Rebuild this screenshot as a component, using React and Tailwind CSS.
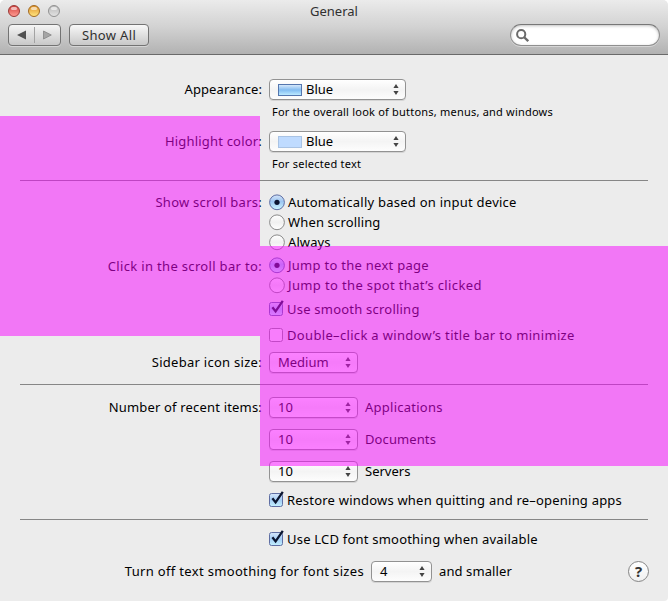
import React from "react";

function Row({ className = "", labelClass = "", label = "", children }) {
  return (
    <div className={`flex items-center gap-[7px] ${className}`}>
      <div className={`w-[262px] shrink-0 text-right whitespace-nowrap ${labelClass}`}>{label}</div>
      {children}
    </div>
  );
}

function Popup({ className = "", swatch, children }) {
  return (
    <div
      className={`flex h-[21px] shrink-0 items-center rounded-[4px] border border-[#929292] bg-linear-to-b from-white via-[#f4f4f4] to-[#fdfdfd] pr-[6px] pl-2 shadow-[0_1px_0_rgba(0,0,0,0.1)] ${className}`}
    >
      {swatch}
      <span className="grow pb-[2px] whitespace-nowrap">{children}</span>
      <svg width="6" height="11" viewBox="0 0 6 11" fill="#444">
        <path d="M3 0 5.6 4H.4ZM3 11 .4 7h5.2Z" />
      </svg>
    </div>
  );
}

function Radio({ on }) {
  return (
    <svg className="shrink-0" width="16" height="17" viewBox="0 0 16 17">
      <defs>
        <linearGradient id="radioOn" x1="0" y1="0" x2="0" y2="1">
          <stop offset="0" stopColor="#d5e4f8" />
          <stop offset=".45" stopColor="#9cc6f2" />
          <stop offset="1" stopColor="#ccf6ff" />
        </linearGradient>
        <linearGradient id="radioOff" x1="0" y1="0" x2="0" y2="1">
          <stop offset="0" stopColor="#fff" />
          <stop offset=".5" stopColor="#f0f0f0" />
          <stop offset="1" stopColor="#fff" />
        </linearGradient>
      </defs>
      <circle cx="8" cy="8.3" r="7.4" fill={on ? "url(#radioOn)" : "url(#radioOff)"} stroke={on ? "#5f6ea3" : "#8a8a8a"} />
      {on && <circle cx="8" cy="8.3" r="2.6" fill="#0b1530" />}
    </svg>
  );
}

function Check({ on }) {
  return (
    <svg className="shrink-0 overflow-visible" width="14" height="15" viewBox="0 0 14 15">
      <defs>
        <linearGradient id="checkOn" x1="0" y1="0" x2="0" y2="1">
          <stop offset="0" stopColor="#d6e6fa" />
          <stop offset=".5" stopColor="#a4cdf5" />
          <stop offset="1" stopColor="#c4f1ff" />
        </linearGradient>
      </defs>
      <rect x=".5" y=".5" width="13" height="13" rx="2" fill={on ? "url(#checkOn)" : "#f8f8f8"} stroke={on ? "#5f6ea3" : "#8f8f8f"} />
      {on && <path d="M3.4 5.2 6.6 9.4 13.8-1.2" fill="none" stroke="#0b1530" strokeWidth="2.3" />}
    </svg>
  );
}

function Divider({ className = "" }) {
  return <div className={`mx-5 h-px bg-[#868686] ${className}`} />;
}

function Light({ className }) {
  return (
    <div className={`flex h-3 w-3 justify-center rounded-full border pt-px ${className}`}>
      <div className="h-[3px] w-[6px] rounded-full bg-white/60" />
    </div>
  );
}

function Header() {
  return (
    <div className="h-[55px] rounded-t-[5px] border-b border-[#6a6a6a] bg-linear-to-b from-[#ebebeb] via-[#d2d2d2] to-[#b2b2b2]">
      <div className="flex h-[22px] items-center">
        <div className="flex w-[262px] gap-2 pl-2">
          <Light className="border-[#9a3835] bg-linear-to-b from-[#d0403f] to-[#ff9a92]" />
          <Light className="border-[#a2691f] bg-linear-to-b from-[#dd9227] to-[#ffe57c]" />
          <Light className="border-[#919191] bg-linear-to-b from-[#b9b9b9] to-[#e2e2e2]" />
        </div>
        <div className="w-36 pb-px text-center text-[#303030]">General</div>
      </div>
      <div className="flex items-center pt-[2px] pl-2">
        <div className="flex h-[22px] w-[53px] items-center rounded-[4px] border border-[#737373] bg-linear-to-b from-[#f5f5f5] to-[#c8c8c8] pl-2 shadow-[0_1px_0_rgba(255,255,255,0.4)]">
          <svg width="9" height="10" viewBox="0 0 9 10" fill="#505050"><path d="M9 .6v8.8L0 5Z" /></svg>
          <div className="mr-2 ml-2 h-4 w-px bg-[#a3a3a3]" />
          <svg width="9" height="10" viewBox="0 0 9 10" fill="#a5a5a5" stroke="#858585" strokeWidth=".8"><path d="M.5 1v8L8.3 5Z" /></svg>
        </div>
        <div className="ml-2 flex h-[22px] w-20 items-center justify-center rounded-[4px] border border-[#737373] bg-linear-to-b from-[#f8f8f8] to-[#c8c8c8] tracking-[0.35px] text-[#303030] shadow-[0_1px_0_rgba(255,255,255,0.4)]">
          Show All
        </div>
        <div className="mr-2 ml-auto flex h-[22px] w-[150px] items-center rounded-full border border-[#8f8f8f] border-t-[#777] bg-white pl-[5px] shadow-[inset_0_1px_3px_rgba(0,0,0,0.25),0_1px_0_rgba(255,255,255,0.4)]">
          <svg width="13" height="13" viewBox="0 0 13 13" fill="none" stroke="#6b6b6b" strokeWidth="2">
            <circle cx="5.2" cy="5.2" r="4.1" />
            <path d="m8.2 8.2 4 4" strokeWidth="2.3" />
          </svg>
        </div>
      </div>
    </div>
  );
}

export default function App() {
  return (
    <div className="relative h-[601px] w-[668px] overflow-hidden rounded-t-[5px] rounded-br-[4px] bg-[#ececec] font-['Noto_Sans',sans-serif] text-[13px] leading-[16px] text-black">
      <Header />
      <div className="pt-6">
        <Row className="h-[21px]" labelClass="pb-[2px] tracking-[0.1px]" label="Appearance:">
          <Popup className="w-[137px]" swatch={<div className="mr-1 h-3 w-6 border border-[#5476ae] bg-linear-to-b from-[#d5e7fa] via-[#83bdf1] to-[#bceaff]" />}>Blue</Popup>
        </Row>
        <div className="mt-1 h-4 pl-[272px] text-[11px] tracking-[0.21px]">For the overall look of buttons, menus, and windows</div>
        <Row className="mt-[11px] h-[21px]" labelClass="pb-[2px] tracking-[0.19px]" label="Highlight color:">
          <Popup className="w-[137px]" swatch={<div className="mr-1 h-3 w-6 border border-[#a9c3e4] bg-[#bfdbff]" />}>Blue</Popup>
        </Row>
        <div className="mt-1 h-4 pl-[272px] text-[11px] tracking-[0.24px]">For selected text</div>
        <Divider className="mt-2" />
        <Row className="mt-[11px] h-5" labelClass="tracking-[0.25px]" label="Show scroll bars:">
          <Radio on /><span className="-ml-1 tracking-[0.24px]">Automatically based on input device</span>
        </Row>
        <Row className="h-5"><Radio /><span className="-ml-1 tracking-[0.15px]">When scrolling</span></Row>
        <Row className="h-5"><Radio /><span className="-ml-1 tracking-[0.1px]">Always</span></Row>
        <Row className="mt-[3px] h-5" labelClass="pt-[2px] tracking-[0.33px]" label="Click in the scroll bar to:">
          <Radio on /><span className="-ml-1 tracking-[0.27px]">Jump to the next page</span>
        </Row>
        <Row className="h-5"><Radio /><span className="-ml-1 tracking-[0.36px]">Jump to the spot that’s clicked</span></Row>
        <Row className="mt-1 h-5"><Check on /><span className="-ml-[3px] tracking-[0.22px]">Use smooth scrolling</span></Row>
        <Row className="mt-[6px] h-5"><Check /><span className="-ml-[3px] tracking-[0.33px]">Double–click a window’s title bar to minimize</span></Row>
        <Row className="mt-[7px] h-[21px]" labelClass="pb-[2px] tracking-[0.28px]" label="Sidebar icon size:">
          <Popup className="w-[89px]">Medium</Popup>
        </Row>
        <Divider className="mt-[11px]" />
        <Row className="mt-3 h-[21px]" labelClass="pb-[2px] tracking-[0.18px]" label="Number of recent items:">
          <Popup className="w-[89px]">10</Popup><span className="pb-[2px] tracking-[0.25px]">Applications</span>
        </Row>
        <Row className="mt-[11px] h-[21px]"><Popup className="w-[89px]">10</Popup><span className="pb-[2px] tracking-[0.1px]">Documents</span></Row>
        <Row className="mt-[11px] h-[21px]"><Popup className="w-[89px]">10</Popup><span className="pb-[2px]">Servers</span></Row>
        <Row className="mt-2 h-5"><Check on /><span className="-ml-[3px] tracking-[0.21px]">Restore windows when quitting and re–opening apps</span></Row>
        <Divider className="mt-[9px]" />
        <Row className="mt-[9px] h-5"><Check on /><span className="-ml-[3px] tracking-[0.21px]">Use LCD font smoothing when available</span></Row>
        <div className="mt-3 flex h-[21px] items-center gap-[7px] pr-[19px]">
          <div className="w-[364px] pb-[2px] text-right tracking-[0.33px]">Turn off text smoothing for font sizes</div>
          <Popup className="w-[61px]">4</Popup>
          <span className="pb-[2px] tracking-[0.1px]">and smaller</span>
          <div className="ml-auto flex h-[21px] w-[21px] items-center justify-center rounded-full border border-[#858585] bg-linear-to-b from-white to-[#f0f0f0] pb-px text-[15px] font-bold text-[#333]">?</div>
        </div>
      </div>
      <div className="absolute top-[116px] left-0 h-[220px] w-[260px] bg-[#f802ff]/50" />
      <div className="absolute top-[246px] left-[260px] h-[220px] w-[408px] bg-[#f802ff]/50" />
    </div>
  );
}
